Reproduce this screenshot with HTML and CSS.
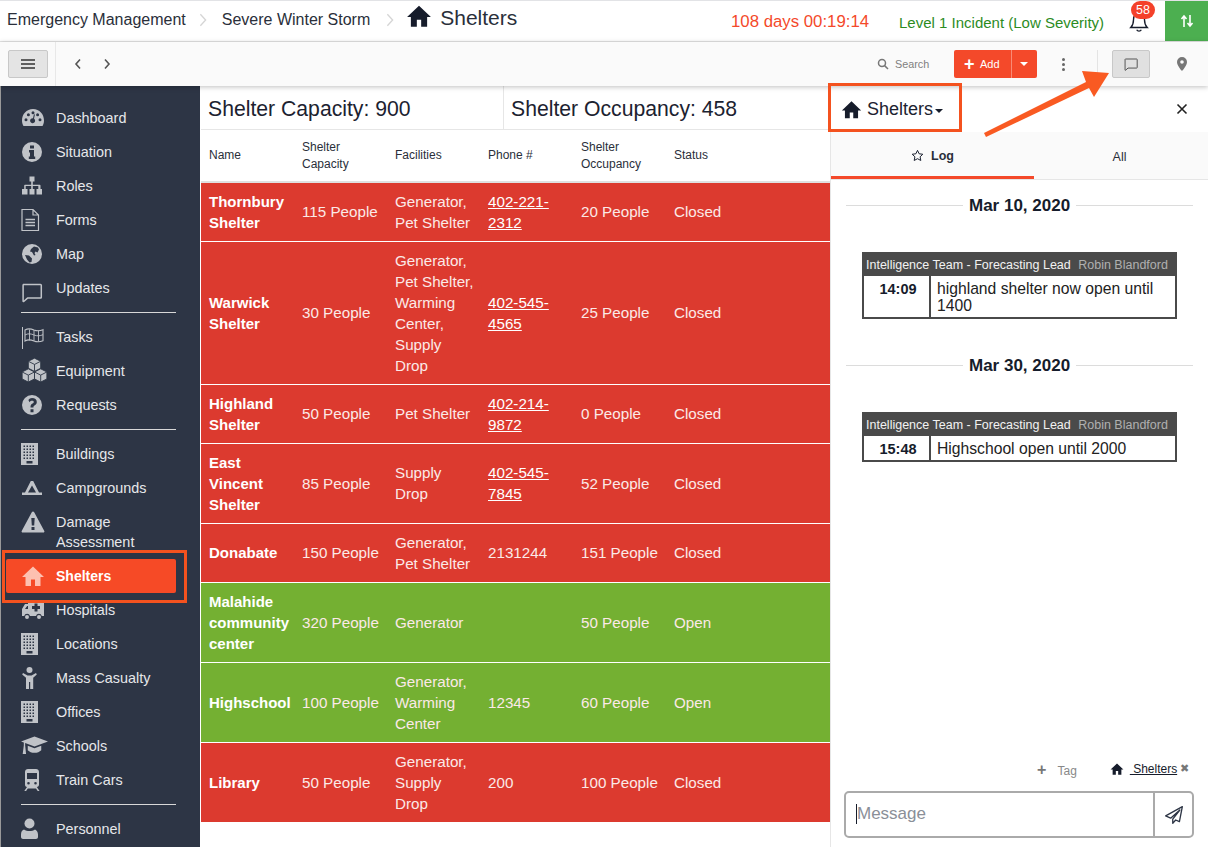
FILE: index.html
```html
<!DOCTYPE html>
<html lang="en">
<head>
  <meta charset="UTF-8">
  <title>Shelters</title>
  <link rel="stylesheet" href="styles.css">
</head>
<body>
  <svg class="sprite" width="0" height="0">
    <symbol id="i-home" viewBox="0 0 24 24"><path d="M12 2.500 1 13h3.500v9h5.500v-6.500h4V22h5.500v-9H23z"/></symbol>
    <symbol id="i-gauge" viewBox="0 0 24 24"><path fill-rule="evenodd" d="M12 3C5.500 3 1 8.200 1 14.500c0 2 .5 3.700 1.300 5.200.2.300.5.300.8.300h17.800c.3 0 .6 0 .8-.3.800-1.500 1.300-3.200 1.300-5.200C23 8.200 18.500 3 12 3zM5 15.300a1.500 1.500 0 1 1 0-3 1.500 1.500 0 0 1 0 3zm2.400-5a1.500 1.500 0 1 1 0-3 1.500 1.500 0 0 1 0 3zM12 8.200a1.500 1.500 0 1 1 0-3 1.500 1.500 0 0 1 0 3zm0 4 1-4.200 1 .3-1 4.300a2.500 2.500 0 1 1-1-.4zm7 3.100a1.500 1.500 0 1 1 0-3 1.500 1.500 0 0 1 0 3zm-2.400-5a1.500 1.500 0 1 1 0-3 1.500 1.500 0 0 1 0 3z"/></symbol>
    <symbol id="i-info" viewBox="1 0 24 24"><path fill-rule="evenodd" d="M12 2a10 10 0 1 0 0 20 10 10 0 0 0 0-20zm-2 3.500h4v3h-4zM9 10h5v6.500h1.200V19H8.800v-2.500H10V12.500H9z"/></symbol>
    <symbol id="i-sitemap" viewBox="1 0 24 24"><path d="M9.500 2.500h5v5h-1.700v3.200h6.900c.5 0 .8.300.8.800v3.500H22v5.500h-5.500V15h1.800v-2.900h-5.500V15h1.700v5.500h-5V15h1.700v-2.900H5.700V15h1.800v5.500H2V15h2.200v-3.500c0-.5.300-.8.800-.8h6.200V7.500H9.500z"/></symbol>
    <symbol id="i-file" viewBox="3 0 24 24"><path fill="none" stroke="currentColor" stroke-width="1.200" d="M4 1.500h11l5.500 5.500v15.500H4zM15 1.500V7h5.500"/><path fill="none" stroke="currentColor" stroke-width="1.400" d="M7.500 11.500h9.500M7.500 14.500h9.500M7.500 17.500h9.500"/></symbol>
    <symbol id="i-globe" viewBox="1 0 24 24"><path fill-rule="evenodd" d="M12 2a10 10 0 1 0 0 20 10 10 0 0 0 0-20zm-1 5 3-2.500 4 1 1 2-1.500 3-2-1-1 1.500 1 2-1.500.5L12 10l-2-.5zM5 13l4 .5 3 3-.5 3.500-2 .5L7 17.500z"/></symbol>
    <symbol id="i-chat" viewBox="0 0 24 24"><path fill="none" stroke="currentColor" stroke-width="1.500" stroke-linejoin="round" d="M3.500 4.500h17a.8.8 0 0 1 .8.800v12a.8.8 0 0 1-.8.800H7.500l-3.800 3.400-.6-.2V5.300a.8.8 0 0 1 .4-.8z"/></symbol>
    <symbol id="i-flag" viewBox="1 0 24 24"><path fill="none" stroke="currentColor" stroke-width="1.100" d="M5 5c3-1.800 6-1.300 9 0 3 1.200 6 1 9-.3v11c-3 1.300-6 1.500-9 .3-3-1.300-6-1.800-9 0z"/><path fill="none" stroke="currentColor" stroke-width=".9" d="M5 10c3-1.800 6-1.300 9 0 3 1.200 6 1 9-.3M9.500 4.500v11M14 5v11M18.500 5.500v11"/><path d="M2 2h1v22H2z"/></symbol>
    <symbol id="i-cubes" viewBox="0 0 24 24"><g stroke="#2d3545" stroke-width=".8" stroke-linejoin="round"><path d="M12 1l5.500 2.800V10L12 12.800 6.500 10V3.800z"/><path fill="none" d="M6.500 3.800 12 6.600l5.500-2.800M12 6.600v6.200"/><path d="M6.500 10.500 12 13.300v6.200l-5.500 2.800L1 19.500v-6.200z"/><path fill="none" d="M1 13.300l5.500 2.800 5.500-2.800M6.500 16.100v6.200"/><path d="M17.500 10.500 23 13.300v6.200l-5.500 2.800-5.500-2.800v-6.200z"/><path fill="none" d="M12 13.300l5.500 2.800 5.500-2.800M17.500 16.100v6.200"/></g></symbol>
    <symbol id="i-question" viewBox="1 0 24 24"><path fill-rule="evenodd" d="M12 2a10 10 0 1 0 0 20 10 10 0 0 0 0-20zm-1.500 14.300h3v3h-3zM12 5c2.900 0 4.800 1.700 4.800 3.900 0 1.700-.9 2.600-2 3.300-.9.600-1.300 1-1.300 1.900v.4h-3V14c0-1.800.8-2.700 2-3.400.8-.5 1.300-.9 1.300-1.600 0-.7-.7-1.200-1.700-1.200-1 0-1.900.5-2.600 1.400L8.400 7C9.300 5.800 10.500 5 12 5z"/></symbol>
    <symbol id="i-building" viewBox="3.500 0 24 24"><path fill-rule="evenodd" d="M3.500 1h17v22h-17zM6 3.500v1.500h1.500V3.500zm3 0v1.500h1.500V3.500zm3 0v1.500h1.500V3.500zm3 0v1.500h1.500V3.500zM6 6.500V8h1.500V6.500zm3 0V8h1.500V6.500zm3 0V8h1.500V6.500zm3 0V8h1.500V6.500zM6 9.500V11h1.500V9.500zm3 0V11h1.500V9.500zm3 0V11h1.500V9.500zm3 0V11h1.500V9.500zM6 12.500V14h1.500v-1.500zm3 0V14h1.500v-1.500zm3 0V14h1.500v-1.500zm3 0V14h1.500v-1.500zM6 15.500V17h1.500v-1.500zm3 0V17h1.500v-1.500zm3 0V17h1.500v-1.500zm3 0V17h1.500v-1.500zM9 19v2.500h6V19z"/></symbol>
    <symbol id="i-camp" viewBox="1 0 24 24"><path fill-rule="evenodd" d="M10.800 5h2.400l5.800 11.500H22V19H2v-2.500h3zM12 9.500 8 16.500h8z"/></symbol>
    <symbol id="i-warning" viewBox="0 0 24 24"><path fill-rule="evenodd" d="M12 1.500c.5 0 .9.200 1.200.7L23.300 21c.4.800-.1 1.500-1 1.500H1.700c-.9 0-1.400-.7-1-1.500L10.800 2.200c.3-.5.700-.7 1.200-.7zM10.300 8l.5 7.500h2.400l.5-7.500zm.2 9v3h3v-3z"/></symbol>
    <symbol id="i-ambulance" viewBox="0 0 24 24"><path fill-rule="evenodd" d="M7 3h15a1 1 0 0 1 1 1v14h-2.200a3 3 0 0 0-5.800 0H9a3 3 0 0 0-5.800 0H1v-7l3-5h3zm-.8 5L4 11h3V8zM13.500 5.500V8H11v3h2.500v2.500h3V11H19V8h-2.500V5.500zM6 17a2 2 0 1 1 0 4 2 2 0 0 1 0-4zm12 0a2 2 0 1 1 0 4 2 2 0 0 1 0-4z"/></symbol>
    <symbol id="i-person" viewBox="0 0 24 24"><circle cx="8.500" cy="4" r="3"/><path d="M2 7 6.500 9.500h4L15 7l.8 1.500-3.600 3.200V23h-3v-7h-1.200v7h-3V11.700L1.200 8.500z"/></symbol>
    <symbol id="i-grad" viewBox="0 0 24 24"><path d="M12 4 24 8.500l-12 4.300-8.300-3V12l.8 7.500H1.500l1-7.500V9.300L0 8.500z"/><path d="M6 12.200l6 2.200 6-2.200v4c-1.500 1.500-3.500 2.300-6 2.300s-4.500-.8-6-2.300z"/></symbol>
    <symbol id="i-train" viewBox="0 0 24 24"><path fill-rule="evenodd" d="M7 1h8c1.700 0 3 1.300 3 3v12.500c0 1.400-.9 2.300-2.200 2.600l2.700 3.900h-1.800l-1.700-2.500H6.800L5.100 23H3.300L6 19.100c-1.300-.3-2-1.200-2-2.600V4c0-1.700 1.300-3 3-3zM6 5v6h10V5zm1.500 9a1.300 1.300 0 1 0 0 2.600 1.300 1.300 0 0 0 0-2.600zm7 0a1.300 1.300 0 1 0 0 2.600 1.300 1.300 0 0 0 0-2.600z"/></symbol>
    <symbol id="i-user" viewBox="0 0 24 24"><circle cx="8.500" cy="6.500" r="5"/><path d="M3 12.500c1.500 1 3.500 1.500 5.500 1.500s4-.5 5.500-1.500c1.500.6 3 2.500 3 5v2.500c0 1-1 2-2 2H2c-1 0-2-1-2-2v-2.500c0-2.500 1-4.400 3-5z"/></symbol>
  </svg>

  <div class="app">
    <header class="topbar">
      <nav class="crumbs">
        <span>Emergency Management</span>
        <svg class="crumb-sep" viewBox="0 0 10 16"><path d="M2 1.500 8 8l-6 6.500"/></svg>
        <span>Severe Winter Storm</span>
        <svg class="crumb-sep crumb-sep-last" viewBox="0 0 10 16"><path d="M2 1.500 8 8l-6 6.500"/></svg>
        <svg class="crumb-home"><use href="#i-home"/></svg>
        <span class="crumb-current">Shelters</span>
      </nav>
      <div class="top-timer">108 days 00:19:14</div>
      <div class="top-level">Level 1 Incident (Low Severity)</div>
      <div class="bell">
        <svg viewBox="0 0 24 24"><path d="M12 3c-3.800 0-6 2.800-6 6.500 0 4.500-1 6.500-3 8.500h18c-2-2-3-4-3-8.500C18 5.800 15.800 3 12 3zM9.500 20.500c.5 1 1.400 1.500 2.500 1.500s2-.5 2.500-1.500"/></svg>
        <span class="bell-badge">58</span>
      </div>
      <button class="sync-btn">
        <svg viewBox="0 0 16 16"><path d="M5 14V4M2.500 6 5 3l2.500 3M11 2v10M8.500 10l2.500 3 2.500-3"/></svg>
      </button>
    </header>

    <div class="toolbar">
      <button class="menu-btn">
        <svg viewBox="0 0 14 10"><path d="M0 1h14M0 5h14M0 9h14"/></svg>
      </button>
      <div class="tool-nav">
        <svg viewBox="0 0 8 12"><path d="M6 1.500 2 6l4 4.500"/></svg>
        <svg viewBox="0 0 8 12"><path d="M2 1.500 6 6l-4 4.500"/></svg>
      </div>
      <div class="tool-right">
        <div class="tool-search">
          <svg viewBox="0 0 12 12"><circle cx="5" cy="5" r="3.500"/><path d="m7.600 7.600 3.400 3.400"/></svg>
          <span>Search</span>
        </div>
        <div class="add-btn">
          <span class="add-main"><b class="add-plus">+</b> Add</span>
          <span class="add-caret"></span>
        </div>
        <div class="tool-dots"><i></i><i></i><i></i></div>
        <div class="tool-sep"></div>
        <button class="chat-btn"><svg><use href="#i-chat"/></svg></button>
        <svg class="tool-pin" viewBox="0 0 12 16"><path fill-rule="evenodd" d="M6 1a5 5 0 0 0-5 5c0 3 3.500 7.500 5 9 1.500-1.500 5-6 5-9a5 5 0 0 0-5-5zm0 3.200a1.800 1.800 0 1 1 0 3.600 1.800 1.800 0 0 1 0-3.600z"/></svg>
      </div>
    </div>

    <div class="main">
      <aside class="sidebar">
        <ul class="nav">
          <li class="nav-item"><svg><use href="#i-gauge"/></svg>Dashboard</li>
          <li class="nav-item"><svg><use href="#i-info"/></svg>Situation</li>
          <li class="nav-item"><svg><use href="#i-sitemap"/></svg>Roles</li>
          <li class="nav-item"><svg><use href="#i-file"/></svg>Forms</li>
          <li class="nav-item"><svg><use href="#i-globe"/></svg>Map</li>
          <li class="nav-item"><svg class="icon-chat"><use href="#i-chat"/></svg>Updates</li>
          <li class="nav-div"></li>
          <li class="nav-item"><svg><use href="#i-flag"/></svg>Tasks</li>
          <li class="nav-item"><svg class="icon-wide"><use href="#i-cubes"/></svg>Equipment</li>
          <li class="nav-item"><svg><use href="#i-question"/></svg>Requests</li>
          <li class="nav-div"></li>
          <li class="nav-item"><svg><use href="#i-building"/></svg>Buildings</li>
          <li class="nav-item"><svg><use href="#i-camp"/></svg>Campgrounds</li>
          <li class="nav-item"><svg><use href="#i-warning"/></svg>Damage<br>Assessment</li>
          <li class="nav-item active"><svg><use href="#i-home"/></svg>Shelters</li>
          <li class="nav-item"><svg><use href="#i-ambulance"/></svg>Hospitals</li>
          <li class="nav-item"><svg><use href="#i-building"/></svg>Locations</li>
          <li class="nav-item"><svg><use href="#i-person"/></svg>Mass Casualty</li>
          <li class="nav-item"><svg><use href="#i-building"/></svg>Offices</li>
          <li class="nav-item"><svg class="icon-wide"><use href="#i-grad"/></svg>Schools</li>
          <li class="nav-item"><svg><use href="#i-train"/></svg>Train Cars</li>
          <li class="nav-div"></li>
          <li class="nav-item"><svg><use href="#i-user"/></svg>Personnel</li>
        </ul>
      </aside>

      <section class="content">
        <div class="stats">
          <div class="stat">Shelter Capacity: 900</div>
          <div class="stat stat-last">Shelter Occupancy: 458</div>
        </div>
        <table class="shelters">
          <thead>
            <tr>
              <th>Name</th>
              <th>Shelter Capacity</th>
              <th>Facilities</th>
              <th>Phone #</th>
              <th>Shelter Occupancy</th>
              <th>Status</th>
            </tr>
          </thead>
          <tbody>
            <tr class="closed">
              <td class="name">Thornbury Shelter</td><td>115 People</td><td>Generator, Pet Shelter</td>
              <td><a href="#">402-221-2312</a></td><td>20 People</td><td>Closed</td>
            </tr>
            <tr class="closed">
              <td class="name">Warwick Shelter</td><td>30 People</td><td>Generator, Pet Shelter, Warming Center, Supply Drop</td>
              <td><a href="#">402-545-4565</a></td><td>25 People</td><td>Closed</td>
            </tr>
            <tr class="closed">
              <td class="name">Highland Shelter</td><td>50 People</td><td>Pet Shelter</td>
              <td><a href="#">402-214-9872</a></td><td>0 People</td><td>Closed</td>
            </tr>
            <tr class="closed">
              <td class="name">East Vincent Shelter</td><td>85 People</td><td>Supply Drop</td>
              <td><a href="#">402-545-7845</a></td><td>52 People</td><td>Closed</td>
            </tr>
            <tr class="closed">
              <td class="name">Donabate</td><td>150 People</td><td>Generator, Pet Shelter</td>
              <td>2131244</td><td>151 People</td><td>Closed</td>
            </tr>
            <tr class="open">
              <td class="name">Malahide community center</td><td>320 People</td><td>Generator</td>
              <td></td><td>50 People</td><td>Open</td>
            </tr>
            <tr class="open">
              <td class="name">Highschool</td><td>100 People</td><td>Generator, Warming Center</td>
              <td>12345</td><td>60 People</td><td>Open</td>
            </tr>
            <tr class="closed">
              <td class="name">Library</td><td>50 People</td><td>Generator, Supply Drop</td>
              <td>200</td><td>100 People</td><td>Closed</td>
            </tr>
          </tbody>
        </table>
      </section>

      <aside class="panel">
        <div class="panel-head">
          <div class="panel-title">
            <svg><use href="#i-home"/></svg>
            <span>Shelters</span>
            <i class="caret"></i>
          </div>
          <svg class="panel-close" viewBox="0 0 12 12"><path d="m1.500 1.500 9 9M10.500 1.500l-9 9"/></svg>
        </div>
        <div class="tabs">
          <div class="tab tab-active">
            <svg viewBox="0 0 24 24"><path d="m12 2.500 3 6.300 6.800.9-5 4.700 1.300 6.800-6.100-3.300-6.100 3.300 1.300-6.800-5-4.700 6.800-.9z"/></svg>
            Log
          </div>
          <div class="tab">All</div>
        </div>
        <div class="log">
          <div class="log-date"><span>Mar 10, 2020</span></div>
          <div class="card">
            <div class="card-head">Intelligence Team - Forecasting Lead <span class="card-user">Robin Blandford</span></div>
            <div class="card-body">
              <div class="card-time">14:09</div>
              <div class="card-msg">highland shelter now open until 1400</div>
            </div>
          </div>
          <div class="log-date"><span>Mar 30, 2020</span></div>
          <div class="card">
            <div class="card-head">Intelligence Team - Forecasting Lead <span class="card-user">Robin Blandford</span></div>
            <div class="card-body">
              <div class="card-time">15:48</div>
              <div class="card-msg">Highschool open until 2000</div>
            </div>
          </div>
        </div>
        <div class="tag-row">
          <span class="tag-add"><b>+</b> Tag</span>
          <span class="tag">
            <svg><use href="#i-home"/></svg>
            <u>&nbsp;Shelters</u>
            <span class="tag-x">&#10006;</span>
          </span>
        </div>
        <div class="compose">
          <div class="compose-input"><i class="cursor"></i>Message</div>
          <div class="compose-send">
            <svg viewBox="0 0 24 24"><path d="M22 2 2 13l6 2.800L19 6 10.500 17v5l3.500-4 4.500 2z"/></svg>
          </div>
        </div>
      </aside>
    </div>

    <!-- annotations drawn over the screenshot -->
    <div class="mark mark-nav"></div>
    <div class="mark mark-panel"></div>
    <svg class="mark-arrow" viewBox="0 0 140 80" width="140" height="80">
      <path d="M4 69 106 18 102 7 129 9 114 33 109 24 6 73z"/>
    </svg>
  </div>
</body>
</html>
```

FILE: styles.css
```css
* {
  box-sizing: border-box;
}

body {
  margin: 0;
  font-family: "Liberation Sans", Arial, sans-serif;
  color: #161c2b;
  background-color: #fff;
  overflow: hidden;
}

button {
  padding: 0;
  font-family: inherit;
}

.sprite {
  position: absolute;
}

.app {
  position: relative;
  display: flex;
  flex-direction: column;
  width: 1208px;
  height: 847px;
  overflow: hidden;
}

/* top bar */
.topbar {
  display: flex;
  align-items: center;
  flex: 0 0 42px;
  border-top: 1px solid #e2e3e6;
  border-bottom: 1px solid #e4e4e4;
  background-color: #fff;
}

.crumbs {
  display: flex;
  align-items: center;
  width: 731px;
  padding-left: 7px;
  padding-bottom: 2px;
  font-size: 16px;
  color: #2a2f3a;
}

.crumb-sep {
  width: 10px;
  height: 14px;
  margin: 0 14px 0 12px;
  fill: none;
  stroke: #d5d5d5;
  stroke-width: 1.500;
}

.crumb-sep-last {
  margin: 0 11px 0 15px;
}

.crumb-home {
  width: 26px;
  height: 26px;
  margin-top: -8px;
  fill: #161c2b;
}

.crumb-current {
  margin-left: 8px;
  margin-top: -5px;
  font-size: 21px;
}

.top-timer {
  width: 168px;
  margin-top: 2px;
  font-size: 16.800px;
  color: #f4492a;
}

.top-level {
  width: 228px;
  margin-top: 2px;
  font-size: 15px;
  color: #2c8c1f;
}

.bell {
  position: relative;
  width: 38px;
  height: 40px;
}

.bell svg {
  position: absolute;
  left: 1px;
  top: 9px;
  width: 22px;
  height: 24px;
  fill: none;
  stroke: #161c2b;
  stroke-width: 1.500;
}

.bell-badge {
  position: absolute;
  left: 4px;
  top: 0;
  width: 24px;
  height: 18px;
  border-radius: 9px;
  background-color: #f4412a;
  color: #fff;
  font-size: 12.500px;
  line-height: 18px;
  text-align: center;
}

.sync-btn {
  width: 43px;
  height: 40px;
  border: none;
  background-color: #4caf50;
}

.sync-btn svg {
  display: block;
  width: 16px;
  height: 16px;
  margin: 0 auto;
  fill: none;
  stroke: #fff;
  stroke-width: 1.600;
}

/* toolbar */
.toolbar {
  position: relative;
  z-index: 2;
  display: flex;
  align-items: center;
  flex: 0 0 44px;
  padding-left: 8px;
  background-color: #fafafa;
  box-shadow: 0 1px 5px rgba(0, 0, 0, 0.25);
}

.menu-btn {
  display: flex;
  align-items: center;
  justify-content: center;
  width: 40px;
  height: 28px;
  border: 1px solid #c8c8c8;
  border-radius: 2px;
  background-color: #e4e4e4;
}

.menu-btn svg {
  width: 14px;
  height: 10px;
  fill: none;
  stroke: #333;
  stroke-width: 1.500;
}

.tool-nav {
  display: flex;
  align-items: center;
  gap: 21px;
  height: 44px;
  margin-left: 7px;
  padding-left: 18px;
  border-left: 1px solid #e8e8e8;
}

.tool-nav svg {
  width: 8px;
  height: 12px;
  fill: none;
  stroke: #555;
  stroke-width: 1.600;
}

.tool-right {
  display: flex;
  align-items: center;
  height: 44px;
  margin-left: auto;
}

.tool-search {
  display: flex;
  align-items: center;
  gap: 6px;
  width: 77px;
  font-size: 10.800px;
  color: #808080;
}

.tool-search svg {
  width: 12px;
  height: 12px;
  fill: none;
  stroke: #777;
  stroke-width: 1.500;
}

.add-btn {
  display: flex;
  width: 83px;
  height: 28px;
  border-radius: 2px;
  background-color: #f4492a;
  color: #fff;
  font-size: 11px;
  line-height: 28px;
}

.add-main {
  width: 58px;
  padding-left: 10px;
  border-right: 1px solid #f98a75;
}

.add-plus {
  margin-right: 3px;
  font-size: 18px;
  vertical-align: -2px;
}

.add-caret {
  width: 0;
  height: 0;
  margin: 12px 0 0 8px;
  border-top: 4px solid #fff;
  border-left: 4px solid transparent;
  border-right: 4px solid transparent;
}

.tool-dots {
  display: flex;
  flex-direction: column;
  gap: 2px;
  margin: 0 32px 0 25px;
}

.tool-dots i {
  width: 3px;
  height: 3px;
  border-radius: 50%;
  background-color: #666;
}

.tool-sep {
  width: 1px;
  height: 28px;
  margin-right: 14px;
  background-color: #e4e4e4;
}

.chat-btn {
  display: flex;
  align-items: center;
  justify-content: center;
  width: 38px;
  height: 28px;
  border: 1px solid #c8c8c8;
  border-radius: 2px;
  background-color: #e0e0e0;
  color: #555;
}

.chat-btn svg {
  width: 16px;
  height: 16px;
}

.tool-pin {
  width: 12px;
  height: 16px;
  margin: 0 20px 0 26px;
  fill: #777;
}

/* sidebar */
.main {
  display: flex;
  flex: 1;
  min-height: 0;
}

.sidebar {
  flex: 0 0 200px;
  padding-top: 15px;
  border-left: 1px solid #999;
  background-color: #2d3545;
  overflow: hidden;
}

.nav {
  margin: 0;
  padding: 0;
  list-style: none;
}

.nav-item {
  position: relative;
  margin: 0 24px 0 5px;
  padding: 7px 0 7px 50px;
  border-radius: 2px;
  font-size: 14.400px;
  line-height: 20px;
  color: #e6e7ea;
}

.nav-item svg {
  position: absolute;
  left: 15px;
  top: 5px;
  width: 24px;
  height: 24px;
  fill: #c0c3c8;
  color: #c0c3c8;
}

.nav-item .icon-chat {
  left: 14px;
  top: 9px;
}

.nav-item .icon-wide {
  top: 3px;
  width: 27px;
  height: 27px;
}

.nav-item.active {
  background-color: #f64a26;
  color: #fff;
  font-weight: 700;
  font-size: 14px;
}

.nav-item.active svg {
  fill: #fdc0b0;
}

.nav-div {
  height: 1px;
  margin: 7px 24px 7px 20px;
  background-color: #d8d8d8;
}

/* table area */
.content {
  flex: 0 0 630px;
  padding-left: 1px;
  background-color: #fff;
}

.stats {
  display: flex;
  height: 44px;
  border-bottom: 1px solid #e6e6e6;
}

.stat {
  width: 303px;
  padding-left: 7px;
  border-right: 1px solid #e6e6e6;
  font-size: 21.200px;
  line-height: 45px;
  color: #1c2230;
}

.stat-last {
  width: auto;
  border-right: none;
}

.shelters {
  width: 629px;
  border-collapse: collapse;
  table-layout: fixed;
}

.shelters th {
  width: 93px;
  height: 52px;
  padding: 0 8px;
  border-bottom: 2px solid #e0e0e0;
  font-size: 12px;
  font-weight: 400;
  line-height: 17px;
  text-align: left;
  color: #2a2f3a;
}

.shelters th:last-child {
  width: auto;
}

.shelters td {
  padding: 7.500px 4px 8.500px 8px;
  border-bottom: 1px solid #fff;
  font-size: 15.200px;
  line-height: 21px;
  color: #fbe9e7;
}

.shelters td.name {
  color: #fff;
  font-weight: 700;
  font-size: 15px;
}

.shelters a {
  color: #fff;
}

.closed {
  background-color: #dc3a2f;
}

.open {
  background-color: #74b032;
}

/* right panel */
.panel {
  display: flex;
  flex-direction: column;
  flex: 1;
  min-width: 0;
  border-left: 1px solid #e6e6e6;
  background-color: #fff;
}

.panel-head {
  display: flex;
  align-items: center;
  justify-content: space-between;
  flex: 0 0 46px;
  padding: 0 20px 0 10px;
}

.panel-title {
  display: flex;
  align-items: center;
  font-size: 18px;
  color: #1c2230;
}

.panel-title svg {
  width: 21px;
  height: 21px;
  margin-right: 5px;
  fill: #161c2b;
}

.caret {
  width: 0;
  height: 0;
  margin: 3px 0 0 2px;
  border-top: 4px solid #161c2b;
  border-left: 4px solid transparent;
  border-right: 4px solid transparent;
}

.panel-close {
  width: 12px;
  height: 12px;
  fill: none;
  stroke: #222;
  stroke-width: 1.600;
}

.tabs {
  display: flex;
  flex: 0 0 47px;
  border-bottom: 1px solid #e6e6e6;
  background-color: #fafafa;
}

.tab {
  display: flex;
  align-items: center;
  justify-content: center;
  gap: 7px;
  flex: 0 0 203px;
  height: 47px;
  padding-top: 3px;
  font-size: 12.500px;
  color: #2a2f3a;
}

.tab + .tab {
  flex: 1;
  padding-right: 3px;
}

.tab-active {
  border-bottom: 3px solid #f4492a;
  font-weight: 700;
}

.tab-active svg {
  width: 13px;
  height: 13px;
  fill: none;
  stroke: #161c2b;
  stroke-width: 1.800;
}

.log {
  flex: 1;
  padding: 15px 15px 0 15px;
}

.log-date {
  display: flex;
  align-items: center;
  gap: 5px;
  height: 21px;
  font-size: 17px;
  font-weight: 700;
  color: #161c2b;
}

.log-date::before,
.log-date::after {
  content: "";
  flex: 1;
  height: 1px;
  background-color: #dcdcdc;
}

.log-date span {
  margin: 0 1px;
}

.log-date::before {
  flex: 0 0 117px;
}

.card {
  width: 315px;
  margin: 36px 0 36px 16px;
  border: 2px solid #4a4a4a;
  background-color: #fff;
}

.card-head {
  height: 22px;
  padding-left: 2px;
  background-color: #4a4a4a;
  color: #f2f2f2;
  font-size: 12.500px;
  line-height: 22px;
  white-space: nowrap;
}

.card-user {
  margin-left: 4px;
  color: #b0b0b0;
}

.card-body {
  display: flex;
}

.card-time {
  flex: 0 0 67px;
  padding-top: 5px;
  padding-left: 3px;
  border-right: 2px solid #4a4a4a;
  font-size: 14.500px;
  font-weight: 700;
  line-height: 17px;
  text-align: center;
}

.card-msg {
  padding: 4px 6px 3px;
  font-size: 15.700px;
  line-height: 17px;
  color: #222;
}

.tag-row {
  display: flex;
  align-items: center;
  flex: 0 0 30px;
  padding-left: 206px;
  padding-bottom: 12px;
  font-size: 12px;
  color: #888;
}

.tag-add b {
  margin-right: 8px;
  font-size: 16px;
  color: #777;
}

.tag {
  display: flex;
  align-items: center;
  margin-left: 33px;
  margin-top: -3px;
  font-size: 12px;
  color: #161c2b;
}

.tag svg {
  width: 14px;
  height: 14px;
  margin-right: 6px;
  fill: #161c2b;
}

.tag-x {
  margin-left: 3px;
  font-size: 11px;
  color: #777;
}

.compose {
  display: flex;
  height: 47px;
  margin: 0 14px 9px 13px;
  border: 2px solid #aaa;
  border-radius: 5px;
}

.compose-input {
  flex: 1;
  display: flex;
  align-items: center;
  padding-left: 10px;
  padding-bottom: 2px;
  font-size: 17px;
  color: #8a8f98;
}

.cursor {
  width: 1px;
  height: 20px;
  background-color: #161c2b;
}

.compose-send {
  display: flex;
  align-items: center;
  justify-content: center;
  width: 39px;
  border-left: 2px solid #aaa;
}

.compose-send svg {
  width: 20px;
  height: 20px;
  fill: none;
  stroke: #2d3545;
  stroke-width: 1.600;
  stroke-linejoin: round;
}

/* annotations */
.mark {
  position: absolute;
  z-index: 5;
  border: 3px solid #f4521f;
}

.mark-nav {
  left: 2px;
  top: 550px;
  width: 185px;
  height: 53px;
}

.mark-panel {
  left: 828px;
  top: 83px;
  width: 134px;
  height: 49px;
}

.mark-arrow {
  position: absolute;
  z-index: 5;
  left: 980px;
  top: 64px;
  fill: #f95a22;
}
```
